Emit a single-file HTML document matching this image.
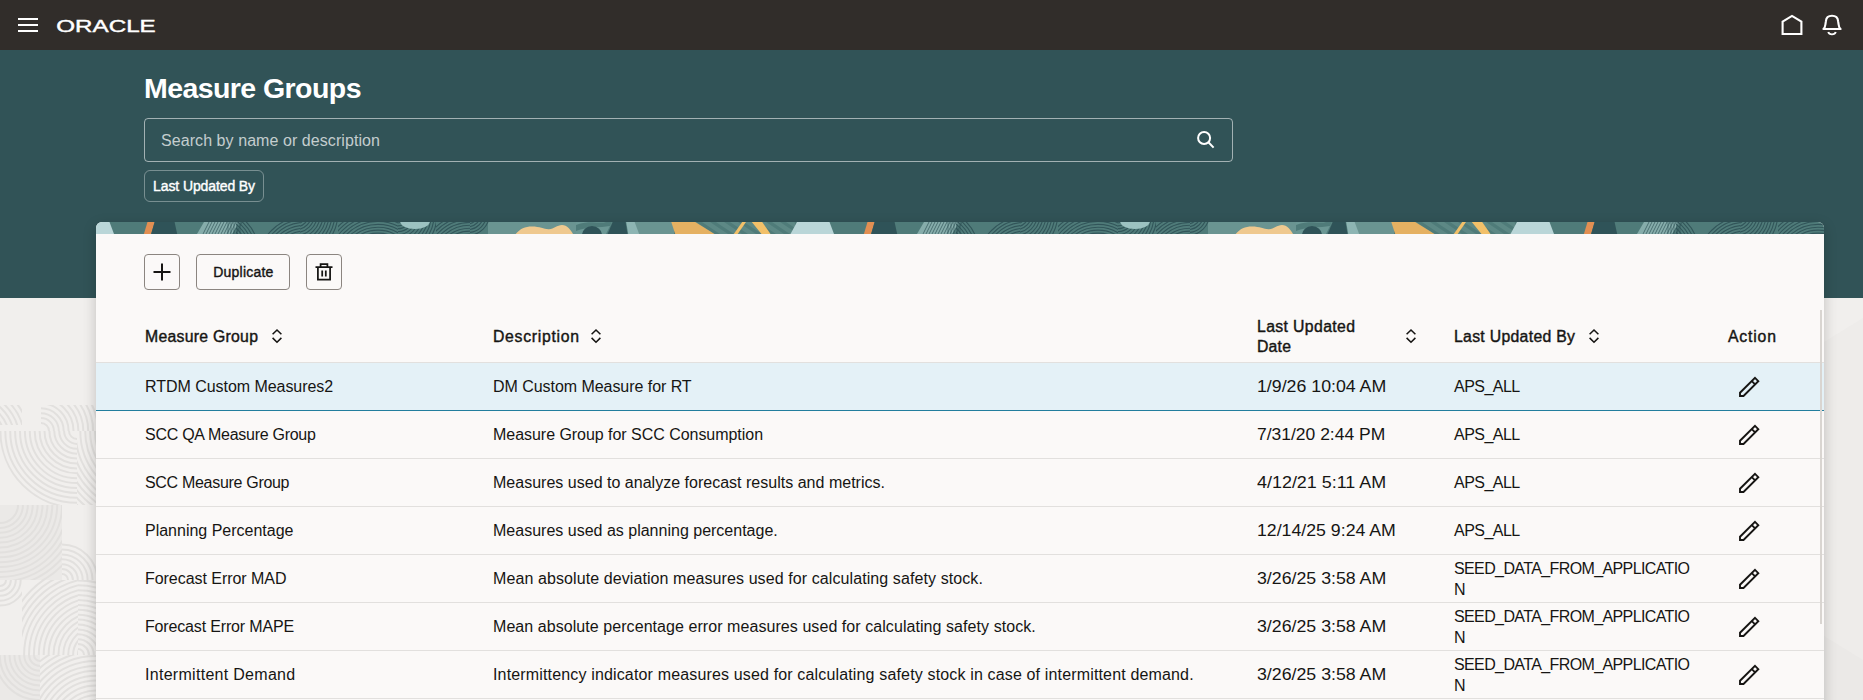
<!DOCTYPE html>
<html lang="en"><head><meta charset="utf-8"><title>Measure Groups</title>
<style>
html,body{margin:0;padding:0}
body{width:1863px;height:700px;overflow:hidden;position:relative;background:#f1efed;font-family:"Liberation Sans",sans-serif;color:#161513}
.abs{position:absolute}
.sb{font-weight:400;-webkit-text-stroke:0.38px currentColor}
#hdr{position:absolute;left:0;top:0;width:1863px;height:50px;background:#312d2a}
#banner{position:absolute;left:0;top:50px;width:1863px;height:248px;background:#315357}
#title{position:absolute;left:144px;top:70px;font-size:28.5px;line-height:36px;font-weight:700;color:#fff;letter-spacing:-0.57px;white-space:nowrap}
#search{position:absolute;left:144px;top:118px;width:1087px;height:42px;border:1px solid rgba(255,255,255,.55);border-radius:4px}
#search span{position:absolute;left:16px;top:0;line-height:43px;font-size:16px;color:rgba(255,255,255,.72);letter-spacing:0.069px;white-space:nowrap}
#chip{position:absolute;left:144px;top:170px;width:118px;height:30px;border:1px solid rgba(255,255,255,.35);border-radius:6px;color:#fff;font-size:14px;line-height:31px;letter-spacing:-0.108px;white-space:nowrap}
#chip span{position:absolute;left:8.1px;top:0}
#card{position:absolute;left:96px;top:222px;width:1728px;height:520px;background:#fbf9f8;border-radius:6px 6px 0 0;box-shadow:0 4px 14px rgba(0,0,0,.2);overflow:hidden}
#strip{position:absolute;left:0;top:0;width:1728px;height:12px;display:block}
.btn{position:absolute;top:254px;height:34px;border:1px solid #8b8580;border-radius:4px;box-sizing:content-box}
.row{position:absolute;left:96px;width:1728px;height:47px;border-bottom:1px solid #e2e0de}
.row.sel{background:#e4f1f7;border-bottom:1px solid #227e9e}
.c{position:absolute;top:0;transform-origin:0 50%;line-height:47px;font-size:16px;white-space:nowrap}
.c1{left:49px} .c2{left:397px} .c3{left:1161px} .c4{left:1358px}
.c.two{line-height:21px;top:3px}
.pencil{position:absolute;left:1641px;top:11px}
.th{position:absolute;font-size:15.8px;font-weight:400;-webkit-text-stroke:0.4px currentColor;line-height:20px;white-space:nowrap}
.sort{position:absolute}
#pat{position:absolute;left:0;top:298px}
</style></head><body>
<svg id="pat" width="1863" height="402" viewBox="0 0 1863 402">
<path d="M1824 44 L1863 20 L1863 402 L1824 402 Z" fill="#eeecea"/><path d="M1824 338 L1863 362 L1863 402 L1824 402 Z" fill="#ebe9e7"/>
<g fill="none" stroke="#e2e0de" stroke-width="2">
<clipPath id="c1"><rect x="41" y="107" width="55" height="26"/></clipPath><g clip-path="url(#c1)"><circle cx="41" cy="133" r="8.0"/><circle cx="41" cy="133" r="12.9"/><circle cx="41" cy="133" r="17.8"/><circle cx="41" cy="133" r="22.7"/><circle cx="41" cy="133" r="27.6"/><circle cx="41" cy="133" r="32.5"/><circle cx="41" cy="133" r="37.4"/><circle cx="41" cy="133" r="42.3"/><circle cx="41" cy="133" r="47.2"/><circle cx="41" cy="133" r="52.1"/><circle cx="41" cy="133" r="57.0"/></g><clipPath id="c2"><rect x="0" y="107" width="22" height="20"/></clipPath><g clip-path="url(#c2)"><circle cx="-30" cy="142" r="20.0"/><circle cx="-30" cy="142" r="24.9"/><circle cx="-30" cy="142" r="29.8"/><circle cx="-30" cy="142" r="34.7"/><circle cx="-30" cy="142" r="39.6"/><circle cx="-30" cy="142" r="44.5"/><circle cx="-30" cy="142" r="49.4"/><circle cx="-30" cy="142" r="54.3"/><circle cx="-30" cy="142" r="59.2"/></g><clipPath id="c3"><rect x="0" y="133" width="77" height="74"/></clipPath><g clip-path="url(#c3)"><circle cx="77" cy="133" r="8.0"/><circle cx="77" cy="133" r="12.9"/><circle cx="77" cy="133" r="17.8"/><circle cx="77" cy="133" r="22.7"/><circle cx="77" cy="133" r="27.6"/><circle cx="77" cy="133" r="32.5"/><circle cx="77" cy="133" r="37.4"/><circle cx="77" cy="133" r="42.3"/><circle cx="77" cy="133" r="47.2"/><circle cx="77" cy="133" r="52.1"/><circle cx="77" cy="133" r="57.0"/><circle cx="77" cy="133" r="61.9"/><circle cx="77" cy="133" r="66.8"/><circle cx="77" cy="133" r="71.7"/><circle cx="77" cy="133" r="76.6"/></g><clipPath id="c4"><rect x="77" y="133" width="19" height="74"/></clipPath><g clip-path="url(#c4)"><circle cx="150" cy="133" r="55.0"/><circle cx="150" cy="133" r="59.9"/><circle cx="150" cy="133" r="64.8"/><circle cx="150" cy="133" r="69.7"/><circle cx="150" cy="133" r="74.6"/><circle cx="150" cy="133" r="79.5"/><circle cx="150" cy="133" r="84.4"/><circle cx="150" cy="133" r="89.3"/><circle cx="150" cy="133" r="94.2"/><circle cx="150" cy="133" r="99.1"/><circle cx="150" cy="133" r="104.0"/><circle cx="150" cy="133" r="108.9"/></g><clipPath id="c5"><rect x="0" y="207" width="62" height="75"/></clipPath><rect x="0" y="207" width="62" height="75" fill="#ebe9e7" stroke="none"/><g clip-path="url(#c5)"><circle cx="0" cy="207" r="18.0"/><circle cx="0" cy="207" r="22.9"/><circle cx="0" cy="207" r="27.8"/><circle cx="0" cy="207" r="32.7"/><circle cx="0" cy="207" r="37.6"/><circle cx="0" cy="207" r="42.5"/><circle cx="0" cy="207" r="47.4"/><circle cx="0" cy="207" r="52.3"/><circle cx="0" cy="207" r="57.2"/><circle cx="0" cy="207" r="62.1"/><circle cx="0" cy="207" r="67.0"/><circle cx="0" cy="207" r="71.9"/><circle cx="0" cy="207" r="76.8"/><circle cx="0" cy="207" r="81.7"/><circle cx="0" cy="207" r="86.6"/></g><clipPath id="c6"><rect x="62" y="207" width="34" height="75"/></clipPath><g clip-path="url(#c6)"><circle cx="62" cy="282" r="6.0"/><circle cx="62" cy="282" r="10.9"/><circle cx="62" cy="282" r="15.8"/><circle cx="62" cy="282" r="20.7"/><circle cx="62" cy="282" r="25.6"/><circle cx="62" cy="282" r="30.5"/><circle cx="62" cy="282" r="35.4"/></g><clipPath id="c7"><rect x="0" y="282" width="22" height="75"/></clipPath><g clip-path="url(#c7)"><circle cx="0" cy="282" r="6.0"/><circle cx="0" cy="282" r="10.9"/><circle cx="0" cy="282" r="15.8"/><circle cx="0" cy="282" r="20.7"/><circle cx="0" cy="282" r="25.6"/></g><clipPath id="c8"><rect x="22" y="282" width="56" height="75"/></clipPath><g clip-path="url(#c8)"><circle cx="96" cy="357" r="18.0"/><circle cx="96" cy="357" r="22.9"/><circle cx="96" cy="357" r="27.8"/><circle cx="96" cy="357" r="32.7"/><circle cx="96" cy="357" r="37.6"/><circle cx="96" cy="357" r="42.5"/><circle cx="96" cy="357" r="47.4"/><circle cx="96" cy="357" r="52.3"/><circle cx="96" cy="357" r="57.2"/><circle cx="96" cy="357" r="62.1"/><circle cx="96" cy="357" r="67.0"/><circle cx="96" cy="357" r="71.9"/><circle cx="96" cy="357" r="76.8"/><circle cx="96" cy="357" r="81.7"/><circle cx="96" cy="357" r="86.6"/><circle cx="96" cy="357" r="91.5"/></g><clipPath id="c9"><rect x="78" y="282" width="18" height="75"/></clipPath><g clip-path="url(#c9)"><circle cx="78" cy="357" r="6.0"/><circle cx="78" cy="357" r="10.9"/><circle cx="78" cy="357" r="15.8"/><circle cx="78" cy="357" r="20.7"/><circle cx="78" cy="357" r="25.6"/><circle cx="78" cy="357" r="30.5"/><circle cx="78" cy="357" r="35.4"/><circle cx="78" cy="357" r="40.3"/><circle cx="78" cy="357" r="45.2"/><circle cx="78" cy="357" r="50.1"/><circle cx="78" cy="357" r="55.0"/><circle cx="78" cy="357" r="59.9"/><circle cx="78" cy="357" r="64.8"/><circle cx="78" cy="357" r="69.7"/><circle cx="78" cy="357" r="74.6"/><circle cx="78" cy="357" r="79.5"/></g><clipPath id="c10"><rect x="0" y="357" width="40" height="45"/></clipPath><rect x="0" y="357" width="40" height="45" fill="#ebe9e7" stroke="none"/><g clip-path="url(#c10)"><circle cx="40" cy="357" r="6.0"/><circle cx="40" cy="357" r="10.9"/><circle cx="40" cy="357" r="15.8"/><circle cx="40" cy="357" r="20.7"/><circle cx="40" cy="357" r="25.6"/><circle cx="40" cy="357" r="30.5"/><circle cx="40" cy="357" r="35.4"/><circle cx="40" cy="357" r="40.3"/><circle cx="40" cy="357" r="45.2"/></g><clipPath id="c11"><rect x="40" y="357" width="56" height="45"/></clipPath><g clip-path="url(#c11)"><circle cx="96" cy="432" r="20.0"/><circle cx="96" cy="432" r="24.9"/><circle cx="96" cy="432" r="29.8"/><circle cx="96" cy="432" r="34.7"/><circle cx="96" cy="432" r="39.6"/><circle cx="96" cy="432" r="44.5"/><circle cx="96" cy="432" r="49.4"/><circle cx="96" cy="432" r="54.3"/><circle cx="96" cy="432" r="59.2"/><circle cx="96" cy="432" r="64.1"/><circle cx="96" cy="432" r="69.0"/><circle cx="96" cy="432" r="73.9"/><circle cx="96" cy="432" r="78.8"/><circle cx="96" cy="432" r="83.7"/><circle cx="96" cy="432" r="88.6"/></g>
</g>
</svg>
<div id="hdr">
<svg class="abs" style="left:18px;top:18px" width="20" height="14" viewBox="0 0 20 14"><path d="M0 1H20M0 7H20M0 13H20" stroke="#fff" stroke-width="2"/></svg>
<svg class="abs" style="left:54px;top:14px" width="106" height="24" viewBox="0 0 106 24"><text x="2.3" y="17.9" font-family="Liberation Sans, sans-serif" font-size="16.4" font-weight="400" fill="#fff" stroke="#fff" stroke-width="0.4" textLength="99.4" lengthAdjust="spacingAndGlyphs">ORACLE</text></svg>
<svg class="abs" style="left:1778px;top:11px" width="28" height="28" viewBox="0 0 28 28"><path d="M4.6 10.7 L14 4.9 L23.4 10.7 L23.4 23 L4.6 23 Z" fill="none" stroke="#fff" stroke-width="2.1" stroke-linejoin="miter"/></svg>
<svg class="abs" style="left:1818px;top:11px" width="28" height="28" viewBox="0 0 28 28"><path d="M5.4 18 C6.7 16.9 7.2 15.5 7.4 13.5 L7.9 10.2 C8.2 6.6 10.5 4.8 14 4.8 C17.5 4.8 19.8 6.6 20.1 10.2 L20.6 13.5 C20.8 15.5 21.3 16.9 22.6 18 Z" fill="none" stroke="#fff" stroke-width="2.1" stroke-linejoin="round"/><path d="M10.2 21 C10.8 22.8 12.4 23.4 14 23.4 C15.6 23.4 17.2 22.8 17.8 21" fill="none" stroke="#fff" stroke-width="1.9"/></svg>
</div>
<div id="banner"></div>
<div id="title">Measure Groups</div>
<div id="search"><span>Search by name or description</span>
<svg class="abs" style="left:1050px;top:10px" width="22" height="22" viewBox="0 0 22 22"><circle cx="9.1" cy="9" r="6" fill="none" stroke="#fff" stroke-width="2"/><path d="M13.4 13.3 L18.6 18.6" stroke="#fff" stroke-width="2"/></svg>
</div>
<div id="chip"><span class="sb">Last Updated By</span></div>
<div id="card">
<svg id="strip" width="1728" height="12" viewBox="0 0 1728 12"><defs><pattern id="tp" width="720" height="12" patternUnits="userSpaceOnUse" patternTransform="translate(-96 0)"><rect x="0" y="0" width="720" height="12" fill="#4f7b79"/><rect x="488" y="0" width="95" height="12" fill="#6a9491"/><rect x="634" y="0" width="40" height="12" fill="#6a9491"/><rect x="690" y="0" width="30" height="12" fill="#5d8885"/><rect x="0" y="0" width="75" height="12" fill="#5d8885"/><path d="M-10 0 L-4 0 L14 12 L8 12 Z" fill="#4f7b79"/><path d="M4 0 L10 0 L28 12 L22 12 Z" fill="#4f7b79"/><path d="M18 0 L24 0 L42 12 L36 12 Z" fill="#4f7b79"/><path d="M32 0 L38 0 L56 12 L50 12 Z" fill="#4f7b79"/><path d="M46 0 L52 0 L70 12 L64 12 Z" fill="#4f7b79"/><path d="M60 0 L66 0 L84 12 L78 12 Z" fill="#4f7b79"/><path d="M74 0 L80 0 L98 12 L92 12 Z" fill="#4f7b79"/><path d="M696 0 L702 0 L720 12 L714 12 Z" fill="#4f7b79"/><path d="M710 0 L716 0 L734 12 L728 12 Z" fill="#4f7b79"/><path d="M724 0 L730 0 L748 12 L742 12 Z" fill="#4f7b79"/><path d="M671.3 0 L695.2 0 L714.5 12 L675.2 12 Z" fill="#e5b162"/><path d="M13.8 12 L17.7 12 L26 0 L22.2 0 Z" fill="#f2c069"/><path d="M31.8 0 L42.2 0 L50.5 12 L41.5 12 Z" fill="#f2c069"/><path d="M77 0 L109.5 0 L114 12 L70.5 12 Z" fill="#bad6d8"/><path d="M147.5 0 L154.6 0 L151.1 12 L143.9 12 Z" fill="#e28f52"/><path d="M154.6 0 L174.6 0 L177.2 12 L151.1 12 Z" fill="#2f5358"/><path d="M204 0 L240 0 L232 12 L197 12 Z" fill="#86adab"/><path d="M209 0 L203 12" stroke="#2f5358" stroke-width="0.7" fill="none"/><path d="M212 0 L206 12" stroke="#2f5358" stroke-width="0.7" fill="none"/><path d="M215 0 L209 12" stroke="#2f5358" stroke-width="0.7" fill="none"/><path d="M218 0 L212 12" stroke="#2f5358" stroke-width="0.7" fill="none"/><path d="M221 0 L215 12" stroke="#2f5358" stroke-width="0.7" fill="none"/><path d="M224 0 L218 12" stroke="#2f5358" stroke-width="0.7" fill="none"/><path d="M227 0 L221 12" stroke="#2f5358" stroke-width="0.7" fill="none"/><path d="M230 0 L224 12" stroke="#2f5358" stroke-width="0.7" fill="none"/><path d="M233 0 L227 12" stroke="#2f5358" stroke-width="0.7" fill="none"/><path d="M236 0 L230 12" stroke="#2f5358" stroke-width="0.7" fill="none"/><path d="M239 0 L233 12" stroke="#2f5358" stroke-width="0.7" fill="none"/><path d="M242 0 L236 12" stroke="#2f5358" stroke-width="0.7" fill="none"/><path d="M228 0 L228 12" stroke="#2f5358" stroke-width="0.6" fill="none"/><path d="M231 0 L231 12" stroke="#2f5358" stroke-width="0.6" fill="none"/><path d="M234 0 L234 12" stroke="#2f5358" stroke-width="0.6" fill="none"/><path d="M237 0 L237 12" stroke="#2f5358" stroke-width="0.6" fill="none"/><path d="M240 0 L240 12" stroke="#2f5358" stroke-width="0.6" fill="none"/><clipPath id="k1"><rect x="236" y="0" width="26" height="12"/></clipPath><clipPath id="k2"><rect x="262" y="0" width="38" height="12"/></clipPath><clipPath id="k3"><rect x="300" y="0" width="38" height="12"/></clipPath><clipPath id="k4"><rect x="338" y="0" width="60" height="12"/></clipPath><clipPath id="k5"><rect x="398" y="0" width="38" height="12"/></clipPath><clipPath id="k6"><rect x="436" y="0" width="34" height="12"/></clipPath><clipPath id="k7"><rect x="470" y="0" width="19" height="12"/></clipPath><g fill="none" stroke="#2c4f54" stroke-width="1.15" opacity="0.85" clip-path="url(#k1)"><circle cx="215" cy="30" r="26"/><circle cx="215" cy="30" r="28.9"/><circle cx="215" cy="30" r="31.799999999999997"/><circle cx="215" cy="30" r="34.699999999999996"/><circle cx="215" cy="30" r="37.599999999999994"/><circle cx="215" cy="30" r="40.49999999999999"/><circle cx="215" cy="30" r="43.39999999999999"/></g><g fill="none" stroke="#2c4f54" stroke-width="1.15" opacity="0.85" clip-path="url(#k2)"><circle cx="305" cy="42" r="30"/><circle cx="305" cy="42" r="32.9"/><circle cx="305" cy="42" r="35.8"/><circle cx="305" cy="42" r="38.699999999999996"/><circle cx="305" cy="42" r="41.599999999999994"/><circle cx="305" cy="42" r="44.49999999999999"/><circle cx="305" cy="42" r="47.39999999999999"/></g><g fill="none" stroke="#2c4f54" stroke-width="1.15" opacity="0.85" clip-path="url(#k3)"><circle cx="296" cy="-8" r="4"/><circle cx="296" cy="-8" r="6.9"/><circle cx="296" cy="-8" r="9.8"/><circle cx="296" cy="-8" r="12.700000000000001"/><circle cx="296" cy="-8" r="15.600000000000001"/><circle cx="296" cy="-8" r="18.5"/><circle cx="296" cy="-8" r="21.4"/><circle cx="296" cy="-8" r="24.299999999999997"/><circle cx="296" cy="-8" r="27.199999999999996"/><circle cx="296" cy="-8" r="30.099999999999994"/><circle cx="296" cy="-8" r="32.99999999999999"/><circle cx="296" cy="-8" r="35.89999999999999"/><circle cx="296" cy="-8" r="38.79999999999999"/><circle cx="296" cy="-8" r="41.69999999999999"/></g><g fill="none" stroke="#2c4f54" stroke-width="1.15" opacity="0.85" clip-path="url(#k4)"><circle cx="378" cy="44" r="30"/><circle cx="378" cy="44" r="32.9"/><circle cx="378" cy="44" r="35.8"/><circle cx="378" cy="44" r="38.699999999999996"/><circle cx="378" cy="44" r="41.599999999999994"/><circle cx="378" cy="44" r="44.49999999999999"/><circle cx="378" cy="44" r="47.39999999999999"/><circle cx="378" cy="44" r="50.29999999999999"/><circle cx="378" cy="44" r="53.19999999999999"/><circle cx="378" cy="44" r="56.09999999999999"/></g><g fill="none" stroke="#2c4f54" stroke-width="1.15" opacity="0.85" clip-path="url(#k5)"><circle cx="398" cy="-6" r="4"/><circle cx="398" cy="-6" r="6.9"/><circle cx="398" cy="-6" r="9.8"/><circle cx="398" cy="-6" r="12.700000000000001"/><circle cx="398" cy="-6" r="15.600000000000001"/><circle cx="398" cy="-6" r="18.5"/><circle cx="398" cy="-6" r="21.4"/><circle cx="398" cy="-6" r="24.299999999999997"/><circle cx="398" cy="-6" r="27.199999999999996"/><circle cx="398" cy="-6" r="30.099999999999994"/><circle cx="398" cy="-6" r="32.99999999999999"/><circle cx="398" cy="-6" r="35.89999999999999"/><circle cx="398" cy="-6" r="38.79999999999999"/></g><g fill="none" stroke="#2c4f54" stroke-width="1.15" opacity="0.85" clip-path="url(#k6)"><circle cx="470" cy="42" r="30"/><circle cx="470" cy="42" r="32.9"/><circle cx="470" cy="42" r="35.8"/><circle cx="470" cy="42" r="38.699999999999996"/><circle cx="470" cy="42" r="41.599999999999994"/><circle cx="470" cy="42" r="44.49999999999999"/><circle cx="470" cy="42" r="47.39999999999999"/><circle cx="470" cy="42" r="50.29999999999999"/></g><g fill="none" stroke="#2c4f54" stroke-width="1.15" opacity="0.85" clip-path="url(#k7)"><circle cx="468" cy="-8" r="4"/><circle cx="468" cy="-8" r="6.9"/><circle cx="468" cy="-8" r="9.8"/><circle cx="468" cy="-8" r="12.700000000000001"/><circle cx="468" cy="-8" r="15.600000000000001"/><circle cx="468" cy="-8" r="18.5"/><circle cx="468" cy="-8" r="21.4"/></g><ellipse cx="415" cy="-1" rx="15" ry="8" fill="#9cc2c1"/><path d="M515.7 12 C520 7 525 4.6 532 4.6 C540 4.6 544 7.4 549 7.2 C554 7 557 3 562 3 C567 3 571 8 573 12 Z" fill="#efc98f"/><path d="M576 0 L612 0 L606 12 L576 12Z" fill="#6b9794"/><path d="M576 3 C590 -2 600 2 606 0 L612 0 L610 4 C600 6 588 4 576 9 Z" fill="#4f7b79"/><ellipse cx="592" cy="13" rx="10" ry="9" fill="#2f5358"/><path d="M612.7 0 L625.6 0 L627.5 12 L607.6 12 Z" fill="#2f5358"/><path d="M626.2 0 L634.6 0 L639.1 12 L628.2 12 Z" fill="#8db5b3"/></pattern></defs><rect width="1728" height="12" fill="url(#tp)"/></svg>
</div>
<div class="btn" style="left:144px;width:34px"><svg class="abs" style="left:8px;top:8px" width="18" height="18" viewBox="0 0 18 18"><path d="M9 0.5V17.5M0.5 9H17.5" stroke="#161513" stroke-width="2"/></svg></div>
<div class="btn" style="left:196px;width:92px"><span class="abs sb" style="left:16.3px;top:0;line-height:35px;font-size:14px;letter-spacing:0.203px;white-space:nowrap">Duplicate</span></div>
<div class="btn" style="left:306px;width:34px"><svg class="abs" style="left:7px;top:7px" width="20" height="20" viewBox="0 0 20 20"><path d="M1.5 5 H18.5 M6.6 4.6 V2.2 H13.4 V4.6 M3.9 5 V17.6 H16.1 V5 M8.2 8.5 V14.5 M11.8 8.5 V14.5" fill="none" stroke="#161513" stroke-width="1.75"/></svg></div>

<div class="th" style="left:145px;top:327px;letter-spacing:0.266px">Measure Group</div>
<svg class="sort" style="left:271px;top:328.2px" width="12" height="16" viewBox="0 0 12 16"><path d="M1.6 6.3 L6 2 L10.4 6.3 M1.6 9.9 L6 14.2 L10.4 9.9" fill="none" stroke="#161513" stroke-width="1.55"/></svg>
<div class="th" style="left:493px;top:327px;letter-spacing:0.700px">Description</div>
<svg class="sort" style="left:590px;top:328.2px" width="12" height="16" viewBox="0 0 12 16"><path d="M1.6 6.3 L6 2 L10.4 6.3 M1.6 9.9 L6 14.2 L10.4 9.9" fill="none" stroke="#161513" stroke-width="1.55"/></svg>
<div class="th" style="left:1257px;top:317px;letter-spacing:0.363px">Last Updated<br><span style="letter-spacing:0.208px">Date</span></div>
<svg class="sort" style="left:1404.8px;top:328.2px" width="12" height="16" viewBox="0 0 12 16"><path d="M1.6 6.3 L6 2 L10.4 6.3 M1.6 9.9 L6 14.2 L10.4 9.9" fill="none" stroke="#161513" stroke-width="1.55"/></svg>
<div class="th" style="left:1454px;top:327px;letter-spacing:0.298px">Last Updated By</div>
<svg class="sort" style="left:1588px;top:328.2px" width="12" height="16" viewBox="0 0 12 16"><path d="M1.6 6.3 L6 2 L10.4 6.3 M1.6 9.9 L6 14.2 L10.4 9.9" fill="none" stroke="#161513" stroke-width="1.55"/></svg>
<div class="th" style="left:1728px;top:327px;letter-spacing:0.811px">Action</div>
<div class="abs" style="left:96px;top:362px;width:1728px;height:1px;background:#e2e0de"></div>
<div class="row sel" style="top:363px">
<div class="c c1" style="letter-spacing:-0.043px">RTDM Custom Measures2</div>
<div class="c c2" style="letter-spacing:-0.048px">DM Custom Measure for RT</div>
<div class="c c3" style="transform:scaleX(1.109)">1/9/26 10:04 AM</div>
<div class="c c4" style="letter-spacing:-0.542px">APS_ALL</div>
<svg class="pencil" width="26" height="26" viewBox="0 0 26 26"><path d="M18 3.9 L21.3 7.2 L6.5 22 L3 22 L3 18.7 Z M14.8 7.1 L18.1 10.4" fill="none" stroke="#161513" stroke-width="1.9" stroke-linejoin="miter"/></svg>
</div><div class="row" style="top:411px">
<div class="c c1" style="letter-spacing:-0.274px">SCC QA Measure Group</div>
<div class="c c2" style="letter-spacing:-0.037px">Measure Group for SCC Consumption</div>
<div class="c c3" style="transform:scaleX(1.092)">7/31/20 2:44 PM</div>
<div class="c c4" style="letter-spacing:-0.542px">APS_ALL</div>
<svg class="pencil" width="26" height="26" viewBox="0 0 26 26"><path d="M18 3.9 L21.3 7.2 L6.5 22 L3 22 L3 18.7 Z M14.8 7.1 L18.1 10.4" fill="none" stroke="#161513" stroke-width="1.9" stroke-linejoin="miter"/></svg>
</div><div class="row" style="top:459px">
<div class="c c1" style="letter-spacing:-0.305px">SCC Measure Group</div>
<div class="c c2" style="letter-spacing:0.013px">Measures used to analyze forecast results and metrics.</div>
<div class="c c3" style="transform:scaleX(1.12)">4/12/21 5:11 AM</div>
<div class="c c4" style="letter-spacing:-0.542px">APS_ALL</div>
<svg class="pencil" width="26" height="26" viewBox="0 0 26 26"><path d="M18 3.9 L21.3 7.2 L6.5 22 L3 22 L3 18.7 Z M14.8 7.1 L18.1 10.4" fill="none" stroke="#161513" stroke-width="1.9" stroke-linejoin="miter"/></svg>
</div><div class="row" style="top:507px">
<div class="c c1" style="letter-spacing:-0.003px">Planning Percentage</div>
<div class="c c2" style="letter-spacing:0.004px">Measures used as planning percentage.</div>
<div class="c c3" style="transform:scaleX(1.107)">12/14/25 9:24 AM</div>
<div class="c c4" style="letter-spacing:-0.542px">APS_ALL</div>
<svg class="pencil" width="26" height="26" viewBox="0 0 26 26"><path d="M18 3.9 L21.3 7.2 L6.5 22 L3 22 L3 18.7 Z M14.8 7.1 L18.1 10.4" fill="none" stroke="#161513" stroke-width="1.9" stroke-linejoin="miter"/></svg>
</div><div class="row" style="top:555px">
<div class="c c1" style="letter-spacing:-0.047px">Forecast Error MAD</div>
<div class="c c2" style="letter-spacing:0.092px">Mean absolute deviation measures used for calculating safety stock.</div>
<div class="c c3" style="transform:scaleX(1.109)">3/26/25 3:58 AM</div>
<div class="c c4 two"><span style="letter-spacing:-0.613px">SEED_DATA_FROM_APPLICATIO</span><br>N</div>
<svg class="pencil" width="26" height="26" viewBox="0 0 26 26"><path d="M18 3.9 L21.3 7.2 L6.5 22 L3 22 L3 18.7 Z M14.8 7.1 L18.1 10.4" fill="none" stroke="#161513" stroke-width="1.9" stroke-linejoin="miter"/></svg>
</div><div class="row" style="top:603px">
<div class="c c1" style="letter-spacing:-0.16px">Forecast Error MAPE</div>
<div class="c c2" style="letter-spacing:0.064px">Mean absolute percentage error measures used for calculating safety stock.</div>
<div class="c c3" style="transform:scaleX(1.109)">3/26/25 3:58 AM</div>
<div class="c c4 two"><span style="letter-spacing:-0.613px">SEED_DATA_FROM_APPLICATIO</span><br>N</div>
<svg class="pencil" width="26" height="26" viewBox="0 0 26 26"><path d="M18 3.9 L21.3 7.2 L6.5 22 L3 22 L3 18.7 Z M14.8 7.1 L18.1 10.4" fill="none" stroke="#161513" stroke-width="1.9" stroke-linejoin="miter"/></svg>
</div><div class="row" style="top:651px">
<div class="c c1" style="letter-spacing:0.292px">Intermittent Demand</div>
<div class="c c2" style="letter-spacing:0.154px">Intermittency indicator measures used for calculating safety stock in case of intermittent demand.</div>
<div class="c c3" style="transform:scaleX(1.109)">3/26/25 3:58 AM</div>
<div class="c c4 two"><span style="letter-spacing:-0.613px">SEED_DATA_FROM_APPLICATIO</span><br>N</div>
<svg class="pencil" width="26" height="26" viewBox="0 0 26 26"><path d="M18 3.9 L21.3 7.2 L6.5 22 L3 22 L3 18.7 Z M14.8 7.1 L18.1 10.4" fill="none" stroke="#161513" stroke-width="1.9" stroke-linejoin="miter"/></svg>
</div>
<div class="abs" style="left:1820px;top:310px;width:2px;height:314px;background:#d9d5d1"></div>
</body></html>
